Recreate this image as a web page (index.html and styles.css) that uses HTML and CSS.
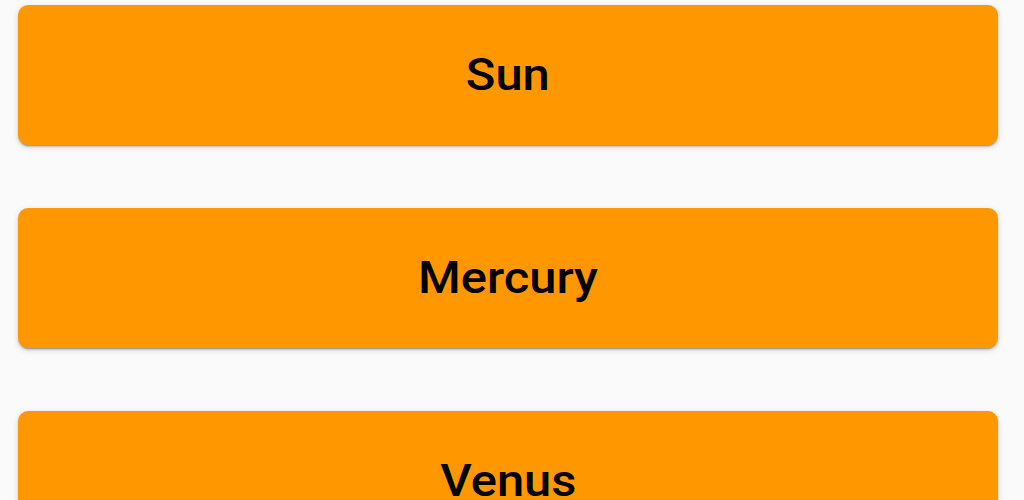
FILE: index.html
```html
<!DOCTYPE html>
<html>
<head>
<meta charset="utf-8">
<link rel="stylesheet" href="styles.css">
</head>
<body>
<div class="list">
  <div class="card"><span class="label">Sun</span></div>
  <div class="card"><span class="label">Mercury</span></div>
  <div class="card"><span class="label">Venus</span></div>
</div>
</body>
</html>
```
FILE: styles.css
```css
html, body {
  margin: 0;
  padding: 0;
  background: #fafafa;
  height: 500px;
  overflow: hidden;
}
.list {
  display: flex;
  flex-direction: column;
  gap: 63px;
  padding: 5px 26px 0 18px;
}
.card {
  height: 140px;
  flex: none;
  background: #ff9800;
  border-radius: 10px;
  box-shadow: 0 3px 1px -2px rgba(0,0,0,0.2), 0 2px 2px 0 rgba(0,0,0,0.14), 0 2px 6px 0 rgba(0,0,0,0.14);
  display: flex;
  align-items: center;
  justify-content: center;
  font-family: Roboto, "Liberation Sans", sans-serif;
  font-weight: 500;
  font-size: 44px;
  color: #000;
}
.label {
  display: inline-block;
  transform: scaleX(1.11);
}
```
